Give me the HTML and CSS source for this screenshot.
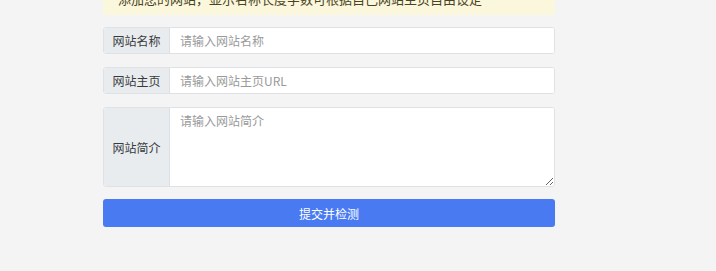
FILE: index.html
```html
<!DOCTYPE html>
<html lang="zh-CN">
<head>
<meta charset="utf-8">
<title>提交网站</title>
<link rel="stylesheet" href="styles.css">
</head>
<body>
<div class="page">
  <div class="alert">添加您的网站，显示名称长度字数可根据自己网站主页自由设定</div>
  <form class="form">
    <div class="group">
      <span class="addon">网站名称</span>
      <input class="control" type="text" placeholder="请输入网站名称">
    </div>
    <div class="group">
      <span class="addon">网站主页</span>
      <input class="control" type="text" placeholder="请输入网站主页URL">
    </div>
    <div class="group group-tall">
      <span class="addon">网站简介</span>
      <textarea class="control area" placeholder="请输入网站简介"></textarea>
    </div>
    <button class="submit" type="button">提交并检测</button>
  </form>
</div>
</body>
</html>
```

FILE: styles.css
```css
html, body {
  margin: 0;
  padding: 0;
  background: #f4f4f4;
  font-family: "Noto Sans CJK SC", "Noto Sans", sans-serif;
}

.page {
  width: 452px;
  padding-left: 103px;
}

.alert {
  margin-top: -13px;
  padding: 3px 15px 7px;
  line-height: 18px;
  font-size: 13px;
  color: #4a4322;
  background: #faf7dc;
  border-radius: 3px;
}

.form {
  display: flex;
  flex-direction: column;
  margin-top: 12px;
}

.group {
  display: flex;
  height: 27px;
  box-sizing: border-box;
  border: 1px solid #dfe1e4;
  border-radius: 3px;
  overflow: hidden;
  background: #fff;
  margin-bottom: 13px;
}

.group-tall {
  height: 80px;
  margin-bottom: 12px;
}

.addon {
  flex: 0 0 66px;
  box-sizing: border-box;
  display: flex;
  align-items: center;
  justify-content: center;
  background: #e9ecef;
  border-right: 1px solid #dcdfe3;
  font-size: 12px;
  color: #383b3e;
}

.control {
  flex: 1;
  min-width: 0;
  border: none;
  outline: none;
  padding: 0 10px;
  font-family: inherit;
  font-size: 12px;
  color: #495057;
  background: #fff;
}

.control::placeholder {
  color: #9a9a9a;
}

.area {
  padding: 4px 10px;
  line-height: 18px;
  resize: vertical;
}

.submit {
  height: 28px;
  border: none;
  border-radius: 3px;
  background: #4a7af2;
  color: #fff;
  font-family: inherit;
  font-size: 12px;
  padding: 0;
  cursor: pointer;
}
```
